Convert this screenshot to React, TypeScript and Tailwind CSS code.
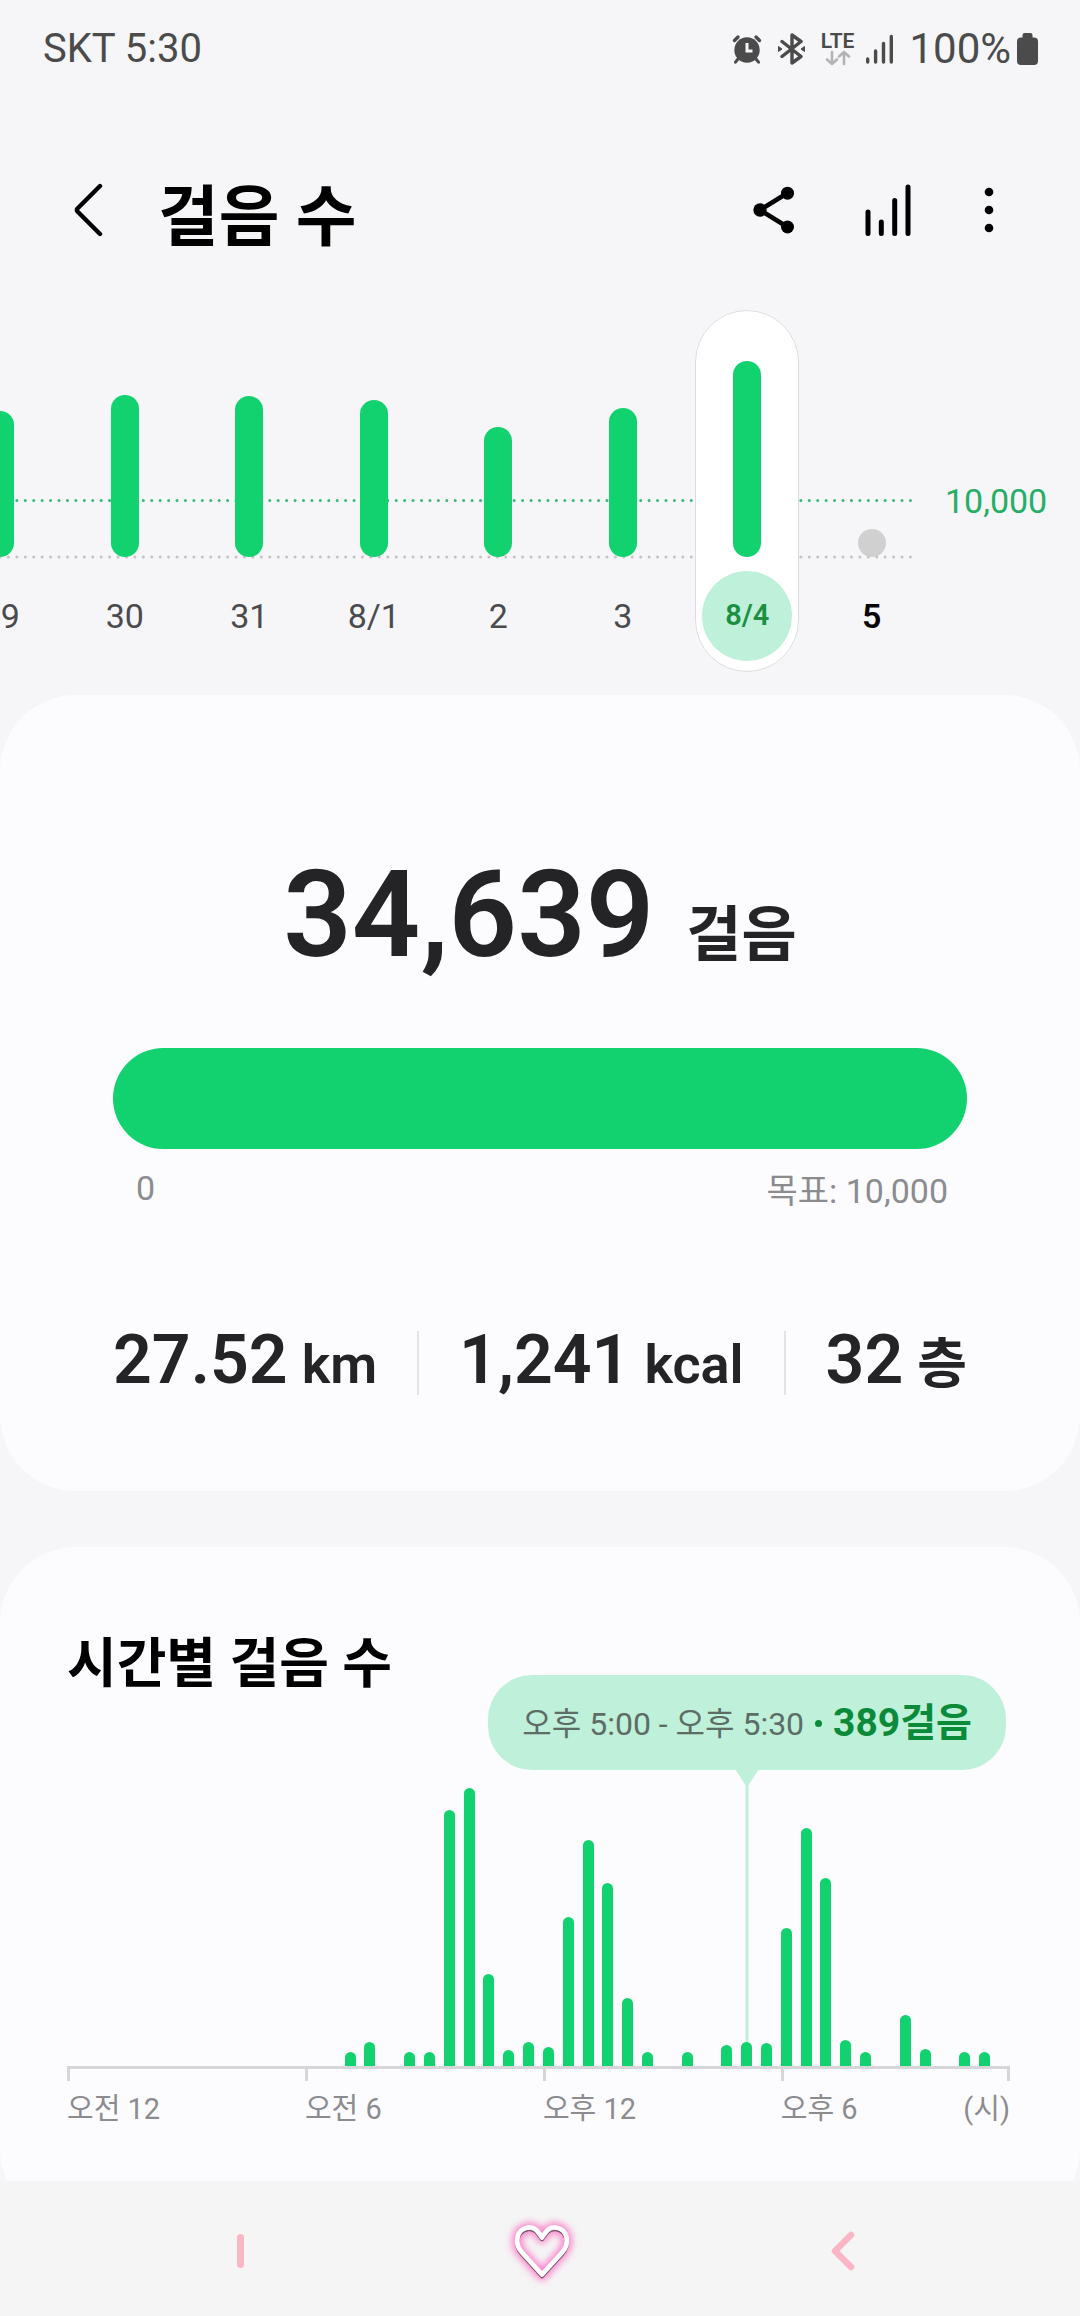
const days = [
  { label: "9", height: 146, edge: true },
  { label: "30", height: 162 },
  { label: "31", height: 161 },
  { label: "8/1", height: 157 },
  { label: "2", height: 130 },
  { label: "3", height: 149 },
  { label: "8/4", height: 196, selected: true },
  { label: "5", height: 28, today: true },
];

// Bar height of each half hour, starting at midnight.
const halfHours = [
  0, 0, 0, 0, 0, 0, 0, 0, 0, 0, 0, 0, 0, 0, 14, 24, 0, 14, 14, 256, 278, 92, 16, 24,
  19, 149, 226, 183, 68, 14, 0, 14, 0, 21, 24, 23, 138, 238, 188, 26, 14, 0, 51, 17, 0, 14, 14, 0,
];

const axisLabels: Record<number, string> = { 0: "오전 12", 12: "오전 6", 24: "오후 12", 36: "오후 6" };
const activeSlot = 34;

function StatusBar() {
  return (
    <div className="flex h-[98px] items-center justify-between pl-[43px] pr-[42px] text-[40px] leading-none text-[#4b4b4b]">
      <span>SKT 5:30</span>
      <div className="flex items-center">
        <svg className="mr-4 h-[30px] w-[30px]" viewBox="0 0 30 30" fill="none" aria-label="알람">
          <circle cx="15" cy="16" r="12.7" fill="#4b4b4b" />
          <path d="M2.5 6.5 6 3M27.5 6.5 24 3" stroke="#4b4b4b" strokeWidth="3.4" strokeLinecap="round" />
          <path d="M6 25l-2.5 3.2M24 25l2.5 3.2" stroke="#4b4b4b" strokeWidth="3" strokeLinecap="round" />
          <path d="M15 9v8h5.5" stroke="#f6f6f8" strokeWidth="3" />
        </svg>
        <svg className="mr-4 h-8 w-[27px]" viewBox="0 0 27 32" fill="none" stroke="#4b4b4b" aria-label="블루투스">
          <path d="M4 8.5 23 23.5 14 30V2l9 6.500L4 23.500" strokeWidth="3.4" strokeLinecap="round" strokeLinejoin="round" />
          <path d="M0.5 13.5v5l3.5-2.5zM26.5 13.5v5L23 16z" fill="#4b4b4b" strokeWidth="1" strokeLinejoin="round" />
        </svg>
        <div className="mr-3 flex flex-col items-center">
          <span className="text-[21px] font-semibold leading-[17px]">LTE</span>
          <svg className="h-4 w-[26px]" viewBox="0 0 26 16" fill="none" stroke="#b3b3b3" strokeWidth="2.6" strokeLinecap="round" strokeLinejoin="round" aria-label="데이터">
            <path d="M7 2v12M2 9.5 7 14l5-4.500M19 14V2M14 6.500 19 2l5 4.500" />
          </svg>
        </div>
        <svg className="mr-4 h-[30px] w-[27px]" viewBox="0 0 27 30" stroke="#4b4b4b" strokeWidth="3.4" strokeLinecap="round" aria-label="신호">
          <path d="M1.700 25v3M9.600 17v11M17.500 9.500V28M25.300 2.500V28" />
        </svg>
        <span className="text-[42px]">100%</span>
        <svg className="ml-1.5 h-8 w-[21px]" viewBox="0 0 21 32" fill="#4b4b4b" aria-label="배터리">
          <path d="M7.500 0h6a2 2 0 0 1 2 2v2.500H17a4 4 0 0 1 4 4V28a4 4 0 0 1-4 4H4a4 4 0 0 1-4-4V8.500a4 4 0 0 1 4-4h1.500V2a2 2 0 0 1 2-2z" />
        </svg>
      </div>
    </div>
  );
}

function Header() {
  return (
    <header className="mt-3 flex h-[200px] items-center pl-[60px] pr-[59px] text-black">
      <button type="button" aria-label="뒤로" className="flex h-16 w-14 items-center justify-center">
        <svg className="h-[54px] w-[30px]" viewBox="0 0 30 54" fill="none" stroke="currentColor" strokeWidth="4.400" strokeLinecap="round" strokeLinejoin="round">
          <path d="M27 3 4.500 25.500a2 2 0 0 0 0 3L27 51" />
        </svg>
      </button>
      <h1 className="ml-[42px] flex-1 pt-4 text-[66px] font-bold leading-none">걸음 수</h1>
      <button type="button" aria-label="공유" className="flex h-16 w-16 items-center justify-center">
        <svg className="h-12 w-[42px]" viewBox="0 0 42 48" fill="currentColor" stroke="currentColor">
          <path d="M34.500 7 7 24l27.500 17" fill="none" strokeWidth="4.600" />
          <circle cx="34.500" cy="7.200" r="6.500" stroke="none" />
          <circle cx="7" cy="24" r="6.700" stroke="none" />
          <circle cx="34.500" cy="41" r="6.500" stroke="none" />
        </svg>
      </button>
      <button type="button" aria-label="통계" className="ml-[50px] flex h-16 w-16 items-center justify-center">
        <svg className="h-[52px] w-[46px]" viewBox="0 0 46 52" stroke="currentColor" strokeWidth="5" strokeLinecap="round">
          <path d="M3 28v21.500M16.300 38v11.500M29.700 16.500v33M43 3v46.500" />
        </svg>
      </button>
      <button type="button" aria-label="더보기" className="ml-[37px] flex h-16 w-16 items-center justify-center">
        <svg className="h-[46px] w-[10px]" viewBox="0 0 10 46" fill="currentColor">
          <circle cx="5" cy="5" r="4.300" />
          <circle cx="5" cy="23" r="4.300" />
          <circle cx="5" cy="41" r="4.300" />
        </svg>
      </button>
    </header>
  );
}

function labelClass(d: (typeof days)[number]) {
  if (d.selected)
    return "mb-[11px] mt-3.5 flex h-[90px] w-[90px] items-center justify-center rounded-full bg-[#bff0da] text-[29px] font-semibold text-[#1c8f43]";
  if (d.today) return "mb-[11px] mt-3.5 flex h-[90px] items-center text-[34px] font-semibold text-black";
  if (d.edge) return "mb-[11px] mt-3.5 flex h-[90px] items-center pl-5 text-[34px] text-[#4b4b4e]";
  return "mb-[11px] mt-3.5 flex h-[90px] items-center text-[34px] text-[#4b4b4e]";
}

function WeekChart() {
  return (
    <section aria-label="일별 걸음 수" className="flex pb-[23px]">
      <div className="relative min-w-0 flex-1 overflow-hidden">
        <svg className="absolute left-0 top-0 h-[250px] w-full pr-[21px]" fill="none" strokeWidth="3" strokeLinecap="round" aria-hidden="true">
          <line x1="0" y1="190.500" x2="100%" y2="190.500" stroke="#35b978" strokeDasharray="0 8.430" />
          <line x1="0" y1="247" x2="100%" y2="247" stroke="#c4c4c6" strokeDasharray="0 8.430" />
        </svg>
        <div className="relative -ml-[62px] grid grid-cols-8">
          {days.map((d) => (
            <button
              key={d.label}
              type="button"
              className={
                d.selected
                  ? "mx-auto flex w-[104px] flex-col items-center rounded-full bg-white outline-1 -outline-offset-1 outline-[#dcdce0]"
                  : "flex w-full flex-col items-center"
              }
            >
              <span className="flex h-[247px] items-end">
                <span
                  className={d.today ? "w-7 rounded-full bg-[#d0d0d0]" : "w-7 rounded-full bg-[#12d16f]"}
                  style={{ height: d.height }}
                />
              </span>
              <span className={labelClass(d)}>{d.label}</span>
            </button>
          ))}
        </div>
      </div>
      <div className="w-[146px] pl-[11px] pt-[170px] text-[34px] leading-[42px] text-[#26ad66]">10,000</div>
    </section>
  );
}

function Stat({ value, unit }: { value: string; unit: string }) {
  return (
    <div className="flex items-baseline gap-3.5 text-[68px] font-semibold leading-[70px]">
      {value}
      <span className="text-[54px]">{unit}</span>
    </div>
  );
}

function Summary() {
  return (
    <section className="rounded-[76px] bg-[#fcfcff] px-[113px] pb-[91px] pt-[154px] text-[#242427]">
      <div className="flex items-baseline justify-center gap-8 text-[120px] font-semibold leading-[132px]">
        34,639
        <span className="text-[60px]">걸음</span>
      </div>
      <div className="mt-[46px] h-[101px] rounded-full bg-[#12d16f]" role="progressbar" aria-valuenow={34639} aria-valuemin={0} aria-valuemax={10000} aria-label="목표 달성률" />
      <div className="mt-4 flex items-start justify-between pl-[23px] pr-[19px] text-[34px] leading-[52px] text-[#8c8c8f]">
        <span className="leading-[46px]">0</span>
        <span>목표: 10,000</span>
      </div>
      <div className="mt-[108px] flex items-center justify-between">
        <Stat value="27.52" unit="km" />
        <div className="h-16 w-0.5 bg-[#e3e3e6]" />
        <Stat value="1,241" unit="kcal" />
        <div className="h-16 w-0.5 bg-[#e3e3e6]" />
        <Stat value="32" unit="층" />
      </div>
    </section>
  );
}

function HourlyChart() {
  return (
    <section className="-mb-11 mt-14 rounded-[76px] bg-[#fcfcff] pb-[97px] pl-[67px] pr-[70px] pt-[82px]">
      <h2 className="text-[54px] font-bold leading-[72px] text-black">시간별 걸음 수</h2>
      <div className="relative mt-[87px]">
        <div className="absolute -top-[113px] right-1 flex h-[95px] items-center whitespace-nowrap rounded-[44px] bg-[#bff0da] px-[34px] pt-0.5 text-[32px] text-[#5d6d66]">
          오후 5:00 - 오후 5:30
          <span className="mx-[11px] h-[7px] w-[7px] rounded-full bg-[#0b8a3a]" />
          <span className="text-[39px] font-bold text-[#0b8a3a]">389걸음</span>
        </div>
        <div className="flex h-[278px] items-end justify-between">
          {halfHours.map((h, i) => (
            <div key={i} className="relative flex h-full w-[11px] items-end">
              {i === activeSlot && (
                <svg className="absolute -top-[19px] left-1/2 h-[274px] w-6 -translate-x-1/2" viewBox="0 0 24 274" fill="#bff0da" aria-hidden="true">
                  <path d="M0 0h24L13.500 16V274h-3V16z" />
                </svg>
              )}
              <div className="relative w-full rounded-t-full bg-[#12d16f]" style={{ height: h }} />
            </div>
          ))}
        </div>
        <div className="flex h-[15px] justify-between border-t-[3px] border-[#d6d6d9]">
          {halfHours.map((_, i) => (
            <div key={i} className="relative w-[11px]">
              {i in axisLabels && (
                <>
                  <div className="h-full w-[3px] bg-[#d6d6d9]" />
                  <span className="absolute left-0 top-[21px] whitespace-nowrap text-[29px] leading-[38px] text-[#8c8c8f]">{axisLabels[i]}</span>
                </>
              )}
              {i === 47 && <div className="ml-auto h-full w-[3px] bg-[#d6d6d9]" />}
            </div>
          ))}
        </div>
        <div className="mt-[9px] text-right text-[29px] leading-[38px] text-[#8c8c8f]">(시)</div>
      </div>
    </section>
  );
}

function NavBar() {
  return (
    <nav className="relative grid h-[135px] grid-cols-3 bg-[#f5f5f5] pl-[90px] pr-[86px] pt-1">
      <button type="button" aria-label="최근 앱" className="flex items-center justify-center">
        <span className="h-[34px] w-[7px] rounded-full bg-[#fab6c4]" />
      </button>
      <button type="button" aria-label="홈" className="flex items-center justify-center">
        <svg className="h-20 w-20" viewBox="0 0 80 80" fill="none" strokeLinejoin="round">
          <defs>
            <filter id="glow" x="-30%" y="-30%" width="160%" height="160%">
              <feGaussianBlur stdDeviation="3.500" />
            </filter>
          </defs>
          <path d="M40 64 20 42C12 33 14 19 26 17c7-1 10 4 14 10 4-6 7-11 14-10 12 2 14 16 6 25z" stroke="#fb86cc" strokeWidth="11" filter="url(#glow)" />
          <path d="M40 65 20 43C12 34 14 20 26 18c7-1 10 4 14 10 4-6 7-11 14-10 12 2 14 16 6 25z" stroke="#75546a" strokeWidth="4.500" />
          <path d="M40 63.500 20 41.500C12 32.500 14 18.500 26 16.500c7-1 10 4 14 10 4-6 7-11 14-10 12 2 14 16 6 25z" stroke="#fff" strokeWidth="4.800" />
        </svg>
      </button>
      <button type="button" aria-label="뒤로 가기" className="flex items-center justify-center">
        <svg className="h-10 w-6" viewBox="0 0 24 40" fill="none" stroke="#fab6c4" strokeWidth="6.500" strokeLinecap="round" strokeLinejoin="round">
          <path d="M20 4 4 20l16 16" />
        </svg>
      </button>
    </nav>
  );
}

export default function App() {
  return (
    <div className="min-h-screen overflow-hidden bg-[#f6f6f8] font-['Roboto','Noto_Sans_CJK_KR',sans-serif]">
      <StatusBar />
      <Header />
      <main>
        <WeekChart />
        <Summary />
        <HourlyChart />
      </main>
      <NavBar />
    </div>
  );
}
